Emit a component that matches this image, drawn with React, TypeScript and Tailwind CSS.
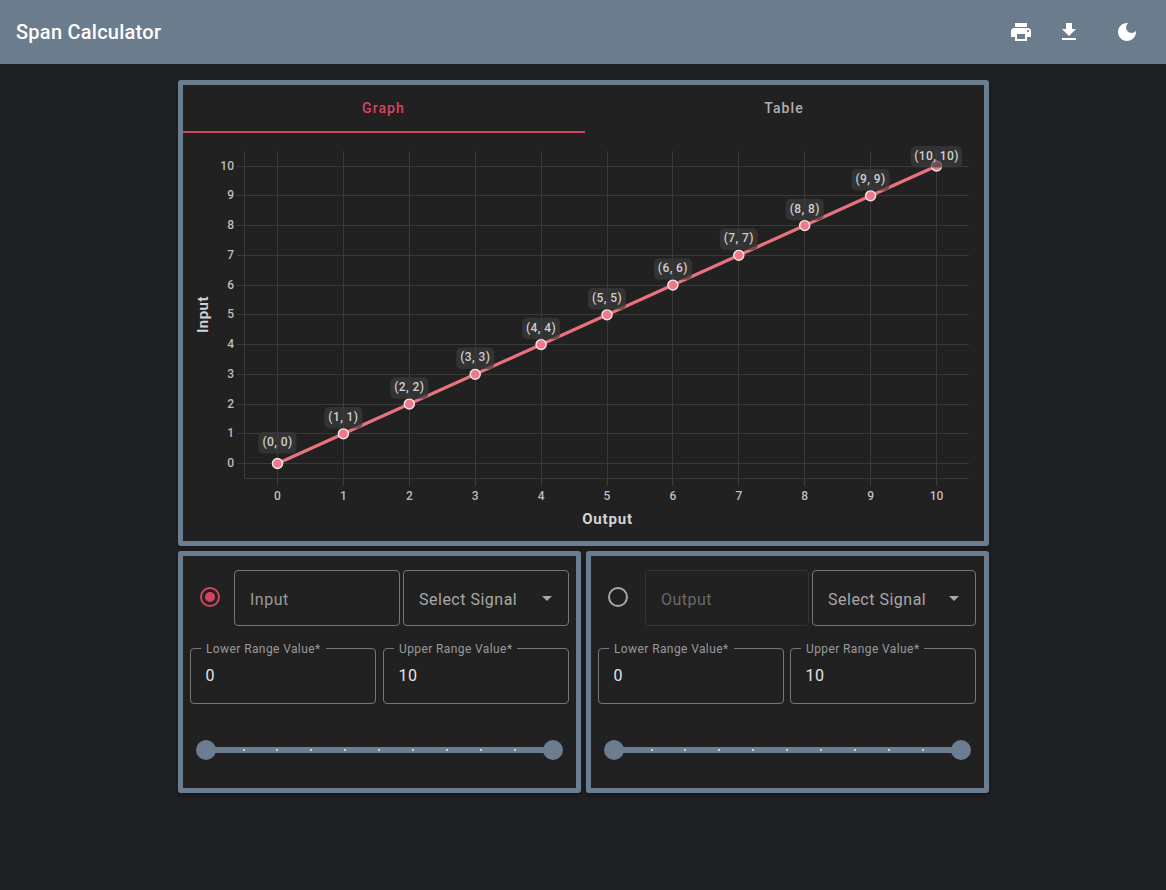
const points = [0, 1, 2, 3, 4, 5, 6, 7, 8, 9, 10]
const xOf = (n: number) => 277.5 + n * 65.9
const yOf = (n: number) => 463.5 - n * 29.75

// label sits higher above the first point and gets pushed down at the chart's top edge
const labelY = (n: number) => {
  if (n === 0) return 442.7
  if (n === 10) return 156.8
  return yOf(n) - 16
}

function Chart() {
  return (
    <svg viewBox="183 133 801 408" className="block h-[408px] w-[801px]" style={{ fontFamily: 'Roboto, sans-serif' }}>
      <g stroke="#3a3a3a" strokeWidth="1">
        {points.map((n) => (
          <line key={n} x1={Math.floor(xOf(n)) + 0.5} x2={Math.floor(xOf(n)) + 0.5} y1="151" y2="486" />
        ))}
        {points.map((n) => (
          <line key={n} x1="237" x2="969" y1={Math.floor(yOf(n)) + 0.5} y2={Math.floor(yOf(n)) + 0.5} />
        ))}
        <line x1="244.5" x2="244.5" y1="151" y2="478" />
        <line x1="244" x2="969" y1="478.5" y2="478.5" />
      </g>
      <g fill="#bdbdbd" fontSize="12" fontWeight="500">
        {points.map((n) => (
          <text key={n} x={xOf(n)} y="499.5" textAnchor="middle">
            {n}
          </text>
        ))}
        {points.map((n) => (
          <text key={n} x="234" y={yOf(n) + 3.5} textAnchor="end">
            {n}
          </text>
        ))}
      </g>
      <text x="607.5" y="524" textAnchor="middle" fill="#d4d4d4" fontSize="15" fontWeight="700" letterSpacing="0.8">
        Output
      </text>
      <text
        x="208"
        y="314.5"
        textAnchor="middle"
        fill="#d4d4d4"
        fontSize="15"
        fontWeight="600"
        letterSpacing="0.5"
        transform="rotate(-90 208 314.5)"
      >
        Input
      </text>
      <line x1={xOf(0)} y1={yOf(0)} x2={xOf(10)} y2={yOf(10)} stroke="#e8737f" strokeWidth="3.25" />
      {points.map((n) => (
        <circle key={n} cx={xOf(n)} cy={yOf(n)} r="5" fill="#ec7a8b" stroke="#f3e3e5" strokeWidth="1.5" />
      ))}
      {points.map((n) => {
        const w = n === 10 ? 51 : 38
        const cy = labelY(n)
        return (
          <g key={n}>
            <rect x={xOf(n) - w / 2} y={cy - 10.8} width={w} height="21.6" rx="5" fill="#3c3c3c" fillOpacity="0.7" />
            <text
              x={xOf(n)}
              y={cy + 3}
              textAnchor="middle"
              fill="#cfcfcf"
              fontSize="12"
              fontWeight="500"
              letterSpacing="0.4"
            >
              ({n}, {n})
            </text>
          </g>
        )
      })}
    </svg>
  )
}

function OutlineBox({ label, value }: { label: string; value: string }) {
  return (
    <div className="relative flex h-14 w-[186px] items-center rounded border border-[#777] pl-[15px] text-base tracking-[0.5px] text-[#e4e4e4]">
      <span className="absolute -top-[7px] left-[10.5px] bg-[#212121] px-[5px] text-xs leading-[14px] tracking-[0.4px] text-[#9a9a9a]">
        {label}
      </span>
      {value}
    </div>
  )
}

function Slider() {
  return (
    <div className="relative mt-9 ml-[6px] flex w-[367px] items-center justify-between">
      <div className="absolute inset-x-[13px] h-[6px] bg-[#6a7e90]" />
      <div className="absolute inset-x-[47px] flex justify-between">
        {points.slice(0, 9).map((n) => (
          <span key={n} className="h-[2px] w-[2px] bg-[#c4ccd3]" />
        ))}
      </div>
      <span className="relative h-5 w-5 rounded-full bg-[#6a7e90]" />
      <span className="relative h-5 w-5 rounded-full bg-[#6a7e90]" />
    </div>
  )
}

function SignalPanel({
  name,
  selected,
  wide,
}: {
  name: string
  selected?: boolean
  wide?: boolean
}) {
  return (
    <div className="h-[242px] w-[403px] rounded-[3px] border-[5px] border-[#6a7e90] bg-[#212121] pt-[14px] pl-[7px] shadow-[0_2px_4px_rgba(0,0,0,0.3)]">
      <div className={`flex h-14 items-center ${wide ? 'w-[379px]' : 'w-[378px]'}`}>
        <div className={`flex flex-none items-center pl-[10px] ${wide ? 'w-[44px]' : 'w-[47px]'}`}>
          <span
            className={`-mt-[2px] flex h-5 w-5 items-center justify-center rounded-full border-2 ${
              selected ? 'border-[#d2475f]' : 'border-[#a8a8a8]'
            }`}
          >
            {selected && <span className="h-[10px] w-[10px] rounded-full bg-[#d2475f]" />}
          </span>
        </div>
        <div
          className={`flex h-14 flex-none items-center rounded border pt-[3px] pl-[15.5px] text-base tracking-[0.5px] ${
            selected ? 'w-[166px] border-[#777] text-[#9a9a9a]' : 'w-[164px] border-[#333] text-[#6a6a6a]'
          }`}
        >
          {name}
        </div>
        <div
          className={`ml-[3px] flex h-14 flex-none items-center justify-between rounded border border-[#777] pr-[9px] pl-[15.5px] text-base tracking-[0.5px] text-[#a8a8a8] ${
            selected ? 'w-[166px]' : 'w-[164px]'
          }`}
        >
          <span className="pt-[3px]">Select Signal</span>
          <svg viewBox="0 0 24 24" className="h-6 w-6" fill="#a8a8a8">
            <path d="M7 10l5 5 5-5z" />
          </svg>
        </div>
      </div>
      <div className={`mt-[22px] flex justify-between ${wide ? 'w-[379px]' : 'w-[378px]'}`}>
        <OutlineBox label="Lower Range Value*" value="0" />
        <OutlineBox label="Upper Range Value*" value="10" />
      </div>
      <Slider />
    </div>
  )
}

export default function App() {
  return (
    <div className="min-h-[890px] bg-[#1f2023]" style={{ fontFamily: 'Roboto, sans-serif' }}>
      <header className="flex h-16 items-center justify-between bg-[#6b7d8d] pr-[27px] pl-4">
        <h1 className="text-xl font-medium tracking-[0.25px] text-white">Span Calculator</h1>
        <div className="flex items-center text-white">
          <svg viewBox="0 0 24 24" className="h-6 w-6" fill="currentColor">
            <path d="M19 8H5c-1.66 0-3 1.34-3 3v6h4v4h12v-4h4v-6c0-1.66-1.34-3-3-3zm-3 11H8v-5h8v5zm3-7c-.55 0-1-.45-1-1s.45-1 1-1 1 .45 1 1-.45 1-1 1zm-1-9H6v4h12V3z" />
          </svg>
          <svg viewBox="0 0 24 24" className="ml-6 h-6 w-6" fill="currentColor">
            <path d="M19 9h-4V3H9v6H5l7 7 7-7zM5 18v2h14v-2H5z" />
          </svg>
          <svg viewBox="0 0 24 24" className="ml-[34px] h-6 w-6" fill="currentColor">
            <path d="M12 3c-4.97 0-9 4.03-9 9s4.03 9 9 9 9-4.03 9-9c0-.46-.04-.92-.1-1.36-.98 1.37-2.58 2.26-4.4 2.26-2.98 0-5.4-2.42-5.4-5.4 0-1.81.89-3.42 2.26-4.4-.44-.06-.9-.1-1.36-.1z" />
          </svg>
        </div>
      </header>
      <main className="mx-auto mt-4 flex w-[811px] flex-col gap-[5px]">
        <section className="h-[466px] rounded-[3px] border-[5px] border-[#6a7e90] bg-[#212121] shadow-[0_2px_4px_rgba(0,0,0,0.3)]">
          <div className="flex h-12 text-sm font-medium tracking-[1.1px]">
            <div className="flex w-[402px] items-center justify-center border-b-2 border-[#d2475f] text-[#d2475f]">
              Graph
            </div>
            <div className="flex flex-1 items-center justify-center pb-[2px] text-[#b0b0b0]">Table</div>
          </div>
          <Chart />
        </section>
        <div className="flex gap-[5px]">
          <SignalPanel name="Input" selected wide />
          <SignalPanel name="Output" />
        </div>
      </main>
    </div>
  )
}
